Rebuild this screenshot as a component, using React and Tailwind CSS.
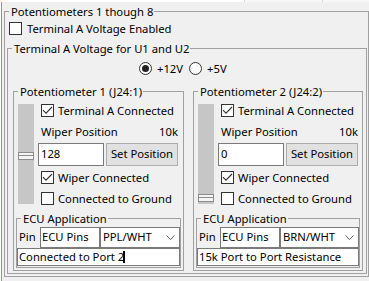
import React from "react";

// classic WinForms group box: fieldset + legend gives the line through the title
function Group({ title, className = "", children }) {
  return (
    <fieldset className={`border border-[#a0a0a0] ${className}`}>
      <legend className="ml-[4px] pl-[2px] pr-[1px] leading-[13px]">{title}</legend>
      {children}
    </fieldset>
  );
}

function CheckBox({ checked }) {
  return (
    <span className="flex h-[13px] w-[13px] shrink-0 items-center justify-center border border-[#333333] bg-white">
      {checked && (
        <svg width="11" height="11" viewBox="0 0 11 11">
          <path d="M1 5.2 L4 8.2 L10 2" fill="none" stroke="#333333" strokeWidth="1.1" />
        </svg>
      )}
    </span>
  );
}

function CheckRow({ checked, label, className = "", gap = "gap-[4px]" }) {
  return (
    <div className={`flex h-[13px] items-center leading-[13px] ${gap} ${className}`}>
      <CheckBox checked={checked} />
      <span>{label}</span>
    </div>
  );
}

function Radio({ checked }) {
  return (
    <span className="flex h-[13px] w-[13px] shrink-0 items-center justify-center rounded-full border border-[#333333] bg-white">
      {checked && <span className="h-[7px] w-[7px] rounded-full bg-[#222222]" />}
    </span>
  );
}

function Potentiometer({ title, value, wire, note, caret, className = "" }) {
  // 0 sits at the bottom of the track
  const thumbTop = 6 + (1 - value / 255) * 84;

  return (
    <Group title={title} className={`h-[186px] ${className}`}>
      <div className="mt-[6px] flex">
        <div className="relative ml-[4px] h-[100px] w-[16px] bg-[#c6c6c6]">
          <div
            className="absolute left-0 h-[8px] w-[16px] border border-[#8c8c8c] bg-[#f4f4f4]"
            style={{ top: thumbTop }}
          >
            <div className="mt-[2px] h-px bg-[#8c8c8c]" />
          </div>
        </div>
        <div className="ml-[4px] flex w-[140px] flex-col">
          <CheckRow checked label="Terminal A Connected" className="pl-[3px]" />
          <div className="mt-[8px] flex h-[14px] items-center justify-between pl-[3px] leading-[14px]">
            <span>Wiper Position</span>
            <span>10k</span>
          </div>
          <div className="mt-[4px] flex gap-[2px]">
            <div className="flex h-[23px] w-[66px] items-center border border-[#7a7a7a] bg-white pl-[2px]">
              {value}
            </div>
            <div className="flex h-[23px] w-[72px] items-center justify-center border border-[#adadad] bg-[#e1e1e1]">
              Set Position
            </div>
          </div>
          <CheckRow checked label="Wiper Connected" className="mt-[5px] pl-[3px]" />
          <CheckRow label="Connected to Ground" className="mt-[8px] pl-[3px]" />
        </div>
      </div>

      <Group title="ECU Application" className="mx-[2px] mt-[7px] h-[56px]">
        <div className="mt-[2px] flex h-[21px]">
          <span className="flex w-[23px] items-center pl-[2px]">Pin</span>
          <div className="flex w-[60px] items-center border border-[#7a7a7a] bg-white pl-[1px]">
            ECU Pins
          </div>
          <div className="flex flex-1 items-center justify-between border border-[#7a7a7a] bg-white pl-[2px] pr-[4px]">
            <span>{wire}</span>
            <svg width="9" height="5" viewBox="0 0 9 5">
              <path d="M0.5 0.5 L4.5 4.5 L8.5 0.5" fill="none" stroke="#606060" strokeWidth="1" />
            </svg>
          </div>
        </div>
        <div className="flex h-[18px] items-center border border-[#7a7a7a] bg-white pl-[1px]">
          <span>{note}</span>
          {caret && <span className="-ml-px h-[12px] w-[2px] bg-black" />}
        </div>
      </Group>
    </Group>
  );
}

export default function App() {
  return (
    <div className="flex h-[281px] w-[369px] flex-col overflow-hidden bg-[#f0f0f0] font-['Noto_Sans',sans-serif] text-[11.25px] text-black">
      {/* remains of the tab strip above */}
      <div className="flex h-[2px] shrink-0">
        <div className="w-[244px] bg-white" />
        <div className="w-px bg-[#d9d9d9]" />
        <div className="w-[77px] bg-[#f7f7f7]" />
        <div className="w-px bg-[#d9d9d9]" />
        <div className="flex-1 bg-[#f7f7f7]" />
      </div>

      <div className="flex flex-1">
        <div className="w-px bg-white" />
        <div className="w-px bg-[#5aa0e6]" />

        <div className="flex-1">
          <Group title="Potentiometers 1 though 8" className="ml-[2px] mt-[3px] h-[272px] w-[365px]">
            <CheckRow label="Terminal A Voltage Enabled" className="mt-[4px] pl-[4px]" gap="gap-[5px]" />

            <Group title="Terminal A Voltage for U1 and U2" className="ml-[2px] mt-[7px] h-[232px] w-[360px]">
              <div className="mt-[7px] flex h-[13px] items-center pl-[131px] leading-[13px]">
                <Radio checked />
                <span className="ml-[5px]">+12V</span>
                <span className="ml-[6px]">
                  <Radio />
                </span>
                <span className="ml-[5px]">+5V</span>
              </div>

              <div className="ml-[5px] mt-[10px] flex gap-[9px]">
                <Potentiometer
                  title="Potentiometer 1 (J24:1)"
                  value={128}
                  wire="PPL/WHT"
                  note="Connected to Port 2"
                  caret
                  className="w-[171px]"
                />
                <Potentiometer
                  title="Potentiometer 2 (J24:2)"
                  value={0}
                  wire="BRN/WHT"
                  note="15k Port to Port Resistance"
                  className="w-[170px]"
                />
              </div>
            </Group>
          </Group>
        </div>
      </div>
    </div>
  );
}
